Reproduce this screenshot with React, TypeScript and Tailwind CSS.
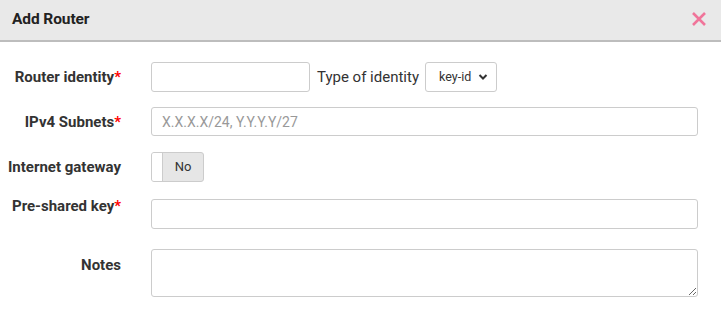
import React from "react";

function Label({ text, req, className = "" }: { text: string; req?: boolean; className?: string }) {
  return (
    <div className={"w-[121px] shrink-0 text-right text-[15px] font-bold text-[#333] leading-[20px] " + className}>
      {text}
      {req && <span className="text-[#ff0000]">*</span>}
    </div>
  );
}

export default function App() {
  return (
    <div className="w-[721px] h-[316px] bg-white overflow-hidden" style={{ fontFamily: "Roboto, 'Liberation Sans', sans-serif" }}>
      <div className="h-[42px] bg-[#e9e9e9] border-b-2 border-[#bdbdbd] flex items-center justify-between pl-[12px] pr-[14px]">
        <div className="text-[15.5px] font-bold text-[#222] tracking-[-0.1px]">Add Router</div>
        <svg width="16" height="16" viewBox="0 0 16 16" className="mt-[-2px]">
          <path d="M2 2 L14 14 M14 2 L2 14" stroke="#f0759a" strokeWidth="2.6" strokeLinecap="butt" />
        </svg>
      </div>
      <div className="flex flex-col pt-[20px] pr-[23px]">
        <div className="flex items-center">
          <Label text="Router identity" req />
          <div className="w-[30px] shrink-0" />
          <input className="w-[159px] h-[30px] border border-[#ccc] rounded-[3px] px-2 text-[14px] outline-none" />
          <span className="ml-[7px] text-[15px] text-[#333]">Type of identity</span>
          <div className="ml-[6px] w-[72px] h-[30px] border border-[#ccc] rounded-[3px] flex items-center justify-between pl-[13px] pr-[8px]">
            <span className="text-[12.5px] text-[#333]">key-id</span>
            <svg width="10" height="8" viewBox="0 0 10 8">
              <path d="M1.5 2 L5 5.5 L8.5 2" stroke="#333" strokeWidth="2" fill="none" />
            </svg>
          </div>
        </div>
        <div className="flex items-center mt-[15px]">
          <Label text="IPv4 Subnets" req />
          <div className="w-[30px] shrink-0" />
          <input
            placeholder="X.X.X.X/24, Y.Y.Y.Y/27"
            className="flex-1 h-[29px] border border-[#ccc] rounded-[3px] px-[10px] text-[14px] outline-none placeholder:text-[#999]"
          />
        </div>
        <div className="flex items-center mt-[16px]">
          <Label text="Internet gateway" />
          <div className="w-[30px] shrink-0" />
          <div className="w-[53px] h-[30px] border border-[#ccc] rounded-[3px] flex overflow-hidden bg-[#e6e6e6]">
            <div className="w-[11px] h-full bg-white border-r border-[#ccc]" />
            <div className="flex-1 flex items-center justify-center text-[13px] text-[#333]">No</div>
          </div>
        </div>
        <div className="flex items-start mt-[17px]">
          <Label text="Pre-shared key" req className="mt-[-3px]" />
          <div className="w-[30px] shrink-0" />
          <input className="flex-1 h-[30px] border border-[#ccc] rounded-[3px] px-2 text-[14px] outline-none" />
        </div>
        <div className="flex items-start mt-[20px]">
          <Label text="Notes" className="mt-[6px]" />
          <div className="w-[30px] shrink-0" />
          <textarea className="flex-1 h-[48px] border border-[#ccc] rounded-[3px] px-2 text-[14px] outline-none resize-y" />
        </div>
      </div>
    </div>
  );
}
